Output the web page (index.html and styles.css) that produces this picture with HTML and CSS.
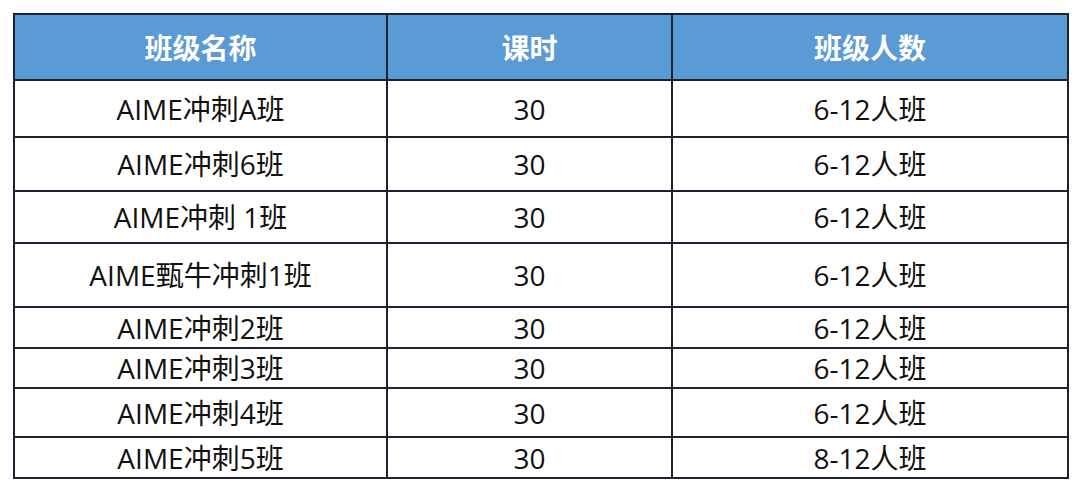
FILE: index.html
```html
<!DOCTYPE html>
<html lang="zh-CN">
<head>
<meta charset="utf-8">
<title>班级</title>
<link rel="stylesheet" href="styles.css">
</head>
<body>
<table class="classes">
  <colgroup>
    <col class="c1"><col class="c2"><col class="c3">
  </colgroup>
  <thead>
    <tr class="head"><th>班级名称</th><th>课时</th><th>班级人数</th></tr>
  </thead>
  <tbody>
    <tr class="r1"><td>AIME冲刺A班</td><td>30</td><td>6-12人班</td></tr>
    <tr class="r2"><td>AIME冲刺6班</td><td>30</td><td>6-12人班</td></tr>
    <tr class="r3"><td>AIME冲刺 1班</td><td>30</td><td>6-12人班</td></tr>
    <tr class="r4"><td>AIME甄牛冲刺1班</td><td>30</td><td>6-12人班</td></tr>
    <tr class="r5"><td>AIME冲刺2班</td><td>30</td><td>6-12人班</td></tr>
    <tr class="r6"><td>AIME冲刺3班</td><td>30</td><td>6-12人班</td></tr>
    <tr class="r7"><td>AIME冲刺4班</td><td>30</td><td>6-12人班</td></tr>
    <tr class="r8"><td>AIME冲刺5班</td><td>30</td><td>8-12人班</td></tr>
  </tbody>
</table>
</body>
</html>
```
FILE: styles.css
```css
html, body {
  margin: 0;
  padding: 0;
  background: #ffffff;
}
body {
  padding: 13px 0 0 13px;
  font-family: "Open Sans", "Noto Sans CJK SC", sans-serif;
}
.classes {
  border-collapse: collapse;
  width: 1054px;
  table-layout: fixed;
}
.c1 { width: 373px; }
.c2 { width: 285px; }
.c3 { width: 396px; }
.classes th,
.classes td {
  border: 2px solid #1c2232;
  text-align: center;
  vertical-align: middle;
  padding: 0;
  line-height: 1;
}
.classes th {
  background: #5b9bd5;
  color: #ffffff;
  font-family: "Noto Sans CJK SC", sans-serif;
  font-weight: 700;
  font-size: 28px;
}
.classes td {
  color: #111111;
  font-size: 28px;
}
.head { height: 66px; }
.r1 { height: 57px; }
.r2 { height: 54px; }
.r3 { height: 52px; }
.r4 { height: 64px; }
.r5 { height: 41px; }
.r6 { height: 40px; }
.r7 { height: 49px; }
.r8 { height: 41px; }
```
